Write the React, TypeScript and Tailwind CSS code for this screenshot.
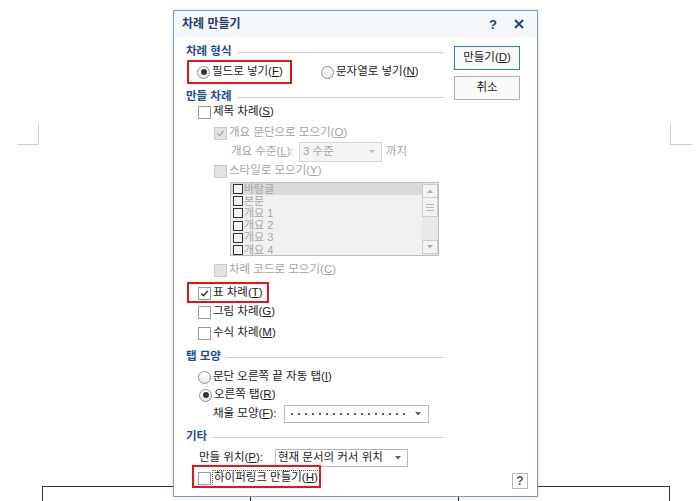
import React from 'react';

const FONT = "font-['Liberation_Sans','Noto_Sans_CJK_KR',sans-serif]";

function Mn({ label, k, tail = '' }: { label: string; k: string; tail?: string }) {
  return (
    <>
      {label}(<span className="underline">{k}</span>){tail}
    </>
  );
}

function Check({ checked = false, disabled = false }: { checked?: boolean; disabled?: boolean }) {
  return (
    <span
      className={`flex h-[13px] w-[13px] shrink-0 items-center justify-center border ${
        disabled ? 'border-[#cacaca] bg-[#e2e2e2]' : 'border-[#9c9c9c] bg-white'
      }`}
    >
      {checked && (
        <svg width="9" height="9" viewBox="0 0 9 9">
          <path d="M1.4 4.6 L3.5 6.7 L7.7 1.9" fill="none" stroke={disabled ? '#a8a8a8' : '#222'} strokeWidth="1.4" />
        </svg>
      )}
    </span>
  );
}

function Radio({ on = false }: { on?: boolean }) {
  return (
    <span className="flex h-[13px] w-[13px] shrink-0 items-center justify-center rounded-full border border-[#8f8f8f] bg-linear-to-b from-white to-[#e9e9e9]">
      {on && <span className="h-[6px] w-[6px] rounded-full bg-[#333]" />}
    </span>
  );
}

function Arrow({ color }: { color: string }) {
  return (
    <svg width="6" height="4" viewBox="0 0 6 4" className="shrink-0">
      <path d="M0 0 H6 L3 3.5 Z" fill={color} />
    </svg>
  );
}

function Section({ title, mt }: { title: string; mt: string }) {
  return (
    <div className={`ml-[12px] flex h-[14px] items-center ${mt}`}>
      <span className="text-[11.5px] font-bold leading-none text-[#1f4f8f]">{title}</span>
      <span className="ml-[5px] h-px flex-1 bg-[#cfcfcf]" />
    </div>
  );
}

const listItems = ['바탕글', '본문', '개요 1', '개요 2', '개요 3', '개요 4'];

export default function App() {
  return (
    <div className={`relative h-[501px] w-[700px] overflow-hidden bg-white ${FONT}`}>
      {/* document page behind the dialog */}
      <div className="flex justify-between pl-[17px] pr-[8px] pt-[124px]">
        <div className="h-[21px] w-[22px] border-b border-r border-[#cfcfcf]" />
        <div className="h-[21px] w-[22px] border-b border-l border-[#cfcfcf]" />
      </div>
      <div className="ml-[42px] mt-[341px] grid h-[20px] w-[628px] grid-cols-[208px_208px_1fr] border-l border-t border-[#333]">
        <div className="border-r border-[#333]" />
        <div className="border-r border-[#333]" />
        <div className="border-r border-[#333]" />
      </div>

      {/* dialog */}
      <div className="absolute left-[173px] top-[10px] flex h-[487px] w-[365px] flex-col border border-[#7f9bba] bg-white text-[11.5px] leading-none text-[#1a1a1a] shadow-[0_0_4px_rgba(0,0,0,0.12)]">
        <div className="flex h-[26px] shrink-0 items-center bg-[#f5f8fb] pl-[8px] pr-[13px] font-bold text-[#233c68]">
          <span className="text-[12px]">차례 만들기</span>
          <span className="ml-auto text-[13px]">?</span>
          <svg width="10" height="10" viewBox="0 0 10 10" className="ml-[17px]">
            <path d="M1 1 L9 9 M9 1 L1 9" stroke="#233c68" strokeWidth="1.8" />
          </svg>
        </div>

        <div className="flex flex-1">
          <div className="flex w-[270px] flex-col">
            <Section title="차례 형식" mt="mt-[8px]" />
            <div className="ml-[23px] mt-[5px] flex h-4 items-center">
              <div className="relative flex w-[124px] items-center">
                <Radio on />
                <span className="ml-[2px]">
                  <Mn label="필드로 넣기" k="F" />
                </span>
                <span className="absolute left-[-10px] top-[-6px] h-[24px] w-[105px] border-2 border-[#e3141c]" />
              </div>
              <Radio />
              <span className="ml-[2px]">
                <Mn label="문자열로 넣기" k="N" />
              </span>
            </div>

            <Section title="만들 차례" mt="mt-[10px]" />
            <div className="ml-[24px] flex h-4 items-center">
              <Check />
              <span className="ml-[2px]">
                <Mn label="제목 차례" k="S" />
              </span>
            </div>
            <div className="ml-[40px] mt-[5px] flex h-4 items-center text-[#a3a3a3]">
              <Check checked disabled />
              <span className="ml-[2px]">
                <Mn label="개요 문단으로 모으기" k="O" />
              </span>
            </div>
            <div className="ml-[57px] mt-[3px] flex h-4 items-center text-[#a3a3a3]">
              <span className="w-[68px] shrink-0">
                <Mn label="개요 수준" k="L" tail=":" />
              </span>
              <div className="flex h-[20px] w-[83px] shrink-0 items-center border border-[#d6d6d6] bg-[#f4f4f4] pl-[3px] pr-[6px]">
                <span>3 수준</span>
                <span className="ml-auto">
                  <Arrow color="#c4c4c4" />
                </span>
              </div>
              <span className="ml-[4px]">까지</span>
            </div>
            <div className="ml-[40px] mt-[3px] flex h-4 items-center text-[#a3a3a3]">
              <Check disabled />
              <span className="ml-[2px]">
                <Mn label="스타일로 모으기" k="Y" />
              </span>
            </div>
            <div className="ml-[56px] mt-[3px] flex h-[74px] w-[209px] border border-[#bdbdbd] bg-[#f0f0f0]">
              <div className="flex-1 overflow-hidden">
                {listItems.map((it, i) => (
                  <div key={it} className={`flex h-[12.2px] items-center ${i === 0 ? 'bg-[#dadada]' : ''}`}>
                    <span className="ml-[2px] h-[10px] w-[10px] shrink-0 border border-[#333] bg-[#f6f6f6]" />
                    <span className="ml-[1px] text-[11px] text-[#a6a6a6]">{it}</span>
                  </div>
                ))}
              </div>
              <div className="flex w-[16px] flex-col bg-[#e8e8e8] py-[1px]">
                <div className="flex h-[14px] items-center justify-center border border-[#cbcbcb] bg-[#f3f3f3]">
                  <svg width="6" height="4" viewBox="0 0 6 4">
                    <path d="M0 4 H6 L3 0.5 Z" fill="#b0b0b0" />
                  </svg>
                </div>
                <div className="flex h-[19px] flex-col items-center justify-center gap-[2px] border border-t-0 border-[#cbcbcb] bg-[#f3f3f3]">
                  <span className="h-px w-[8px] bg-[#b8b8b8]" />
                  <span className="h-px w-[8px] bg-[#b8b8b8]" />
                  <span className="h-px w-[8px] bg-[#b8b8b8]" />
                </div>
                <div className="mt-auto flex h-[14px] items-center justify-center border border-[#cbcbcb] bg-[#f3f3f3]">
                  <Arrow color="#b0b0b0" />
                </div>
              </div>
            </div>
            <div className="ml-[40px] mt-[6px] flex h-4 items-center text-[#a3a3a3]">
              <Check disabled />
              <span className="ml-[2px]">
                <Mn label="차례 코드로 모으기" k="C" />
              </span>
            </div>
            <div className="relative ml-[24px] mt-[7px] flex h-4 items-center">
              <Check checked />
              <span className="ml-[2px]">
                <Mn label="표 차례" k="T" />
              </span>
              <span className="absolute left-[-11px] top-[-3px] h-[21px] w-[82px] border-2 border-[#e3141c]" />
            </div>
            <div className="ml-[24px] mt-[3px] flex h-4 items-center">
              <Check />
              <span className="ml-[2px]">
                <Mn label="그림 차례" k="G" />
              </span>
            </div>
            <div className="ml-[24px] mt-[5px] flex h-4 items-center">
              <Check />
              <span className="ml-[2px]">
                <Mn label="수식 차례" k="M" />
              </span>
            </div>

            <Section title="탭 모양" mt="mt-[9px]" />
            <div className="ml-[24px] mt-[5px] flex h-4 items-center">
              <Radio />
              <span className="ml-[2px]">
                <Mn label="문단 오른쪽 끝 자동 탭" k="I" />
              </span>
            </div>
            <div className="ml-[25px] mt-[2px] flex h-4 items-center">
              <Radio on />
              <span className="ml-[2px]">
                <Mn label="오른쪽 탭" k="R" />
              </span>
            </div>
            <div className="ml-[39px] mt-[3px] flex h-4 items-center">
              <span className="w-[71px] shrink-0">
                <Mn label="채울 모양" k="F" tail=":" />
              </span>
              <div className="flex h-[18px] w-[145px] shrink-0 items-center border border-[#b9b9b9] bg-white pl-[6px] pr-[7px]">
                <div className="flex gap-[5px]">
                  {Array.from({ length: 17 }).map((_, i) => (
                    <span key={i} className="h-[2px] w-[2px] bg-[#555]" />
                  ))}
                </div>
                <span className="ml-auto">
                  <Arrow color="#606060" />
                </span>
              </div>
            </div>

            <Section title="기타" mt="mt-[8px]" />
            <div className="ml-[25px] mt-[6px] flex h-4 items-center">
              <span className="w-[76px] shrink-0">
                <Mn label="만들 위치" k="P" tail=":" />
              </span>
              <div className="flex h-[18px] w-[133px] shrink-0 items-center border border-[#b9b9b9] bg-white pl-[2px] pr-[6px]">
                <span>현재 문서의 커서 위치</span>
                <span className="ml-auto">
                  <Arrow color="#606060" />
                </span>
              </div>
            </div>
            <div className="relative ml-[24px] mt-[4px] flex h-4 items-center">
              <Check />
              <span className="ml-[1px] flex h-[17px] items-center border border-dotted border-[#555] px-[1px]">
                <Mn label="하이퍼링크 만들기" k="H" />
              </span>
              <span className="absolute left-[-6px] top-[-5px] h-[23px] w-[129px] border-2 border-[#e3141c]" />
            </div>
          </div>

          <div className="ml-[10px] flex w-[74px] flex-col pb-[7px] pt-[9px]">
            <button className="flex h-[24px] w-[66px] items-center justify-center border border-[#2f7bc8] bg-[#fafafa] text-[11.5px]">
              <Mn label="만들기" k="D" />
            </button>
            <button className="mt-[6px] flex h-[24px] w-[66px] items-center justify-center border border-[#adadad] bg-[#fafafa] text-[11.5px]">
              취소
            </button>
            <div className="mt-auto flex h-[16px] w-[16px] items-center justify-center self-end border border-[#b5b5b5] bg-white text-[12px] font-bold text-[#555]">
              ?
            </div>
          </div>
        </div>
      </div>
    </div>
  );
}
